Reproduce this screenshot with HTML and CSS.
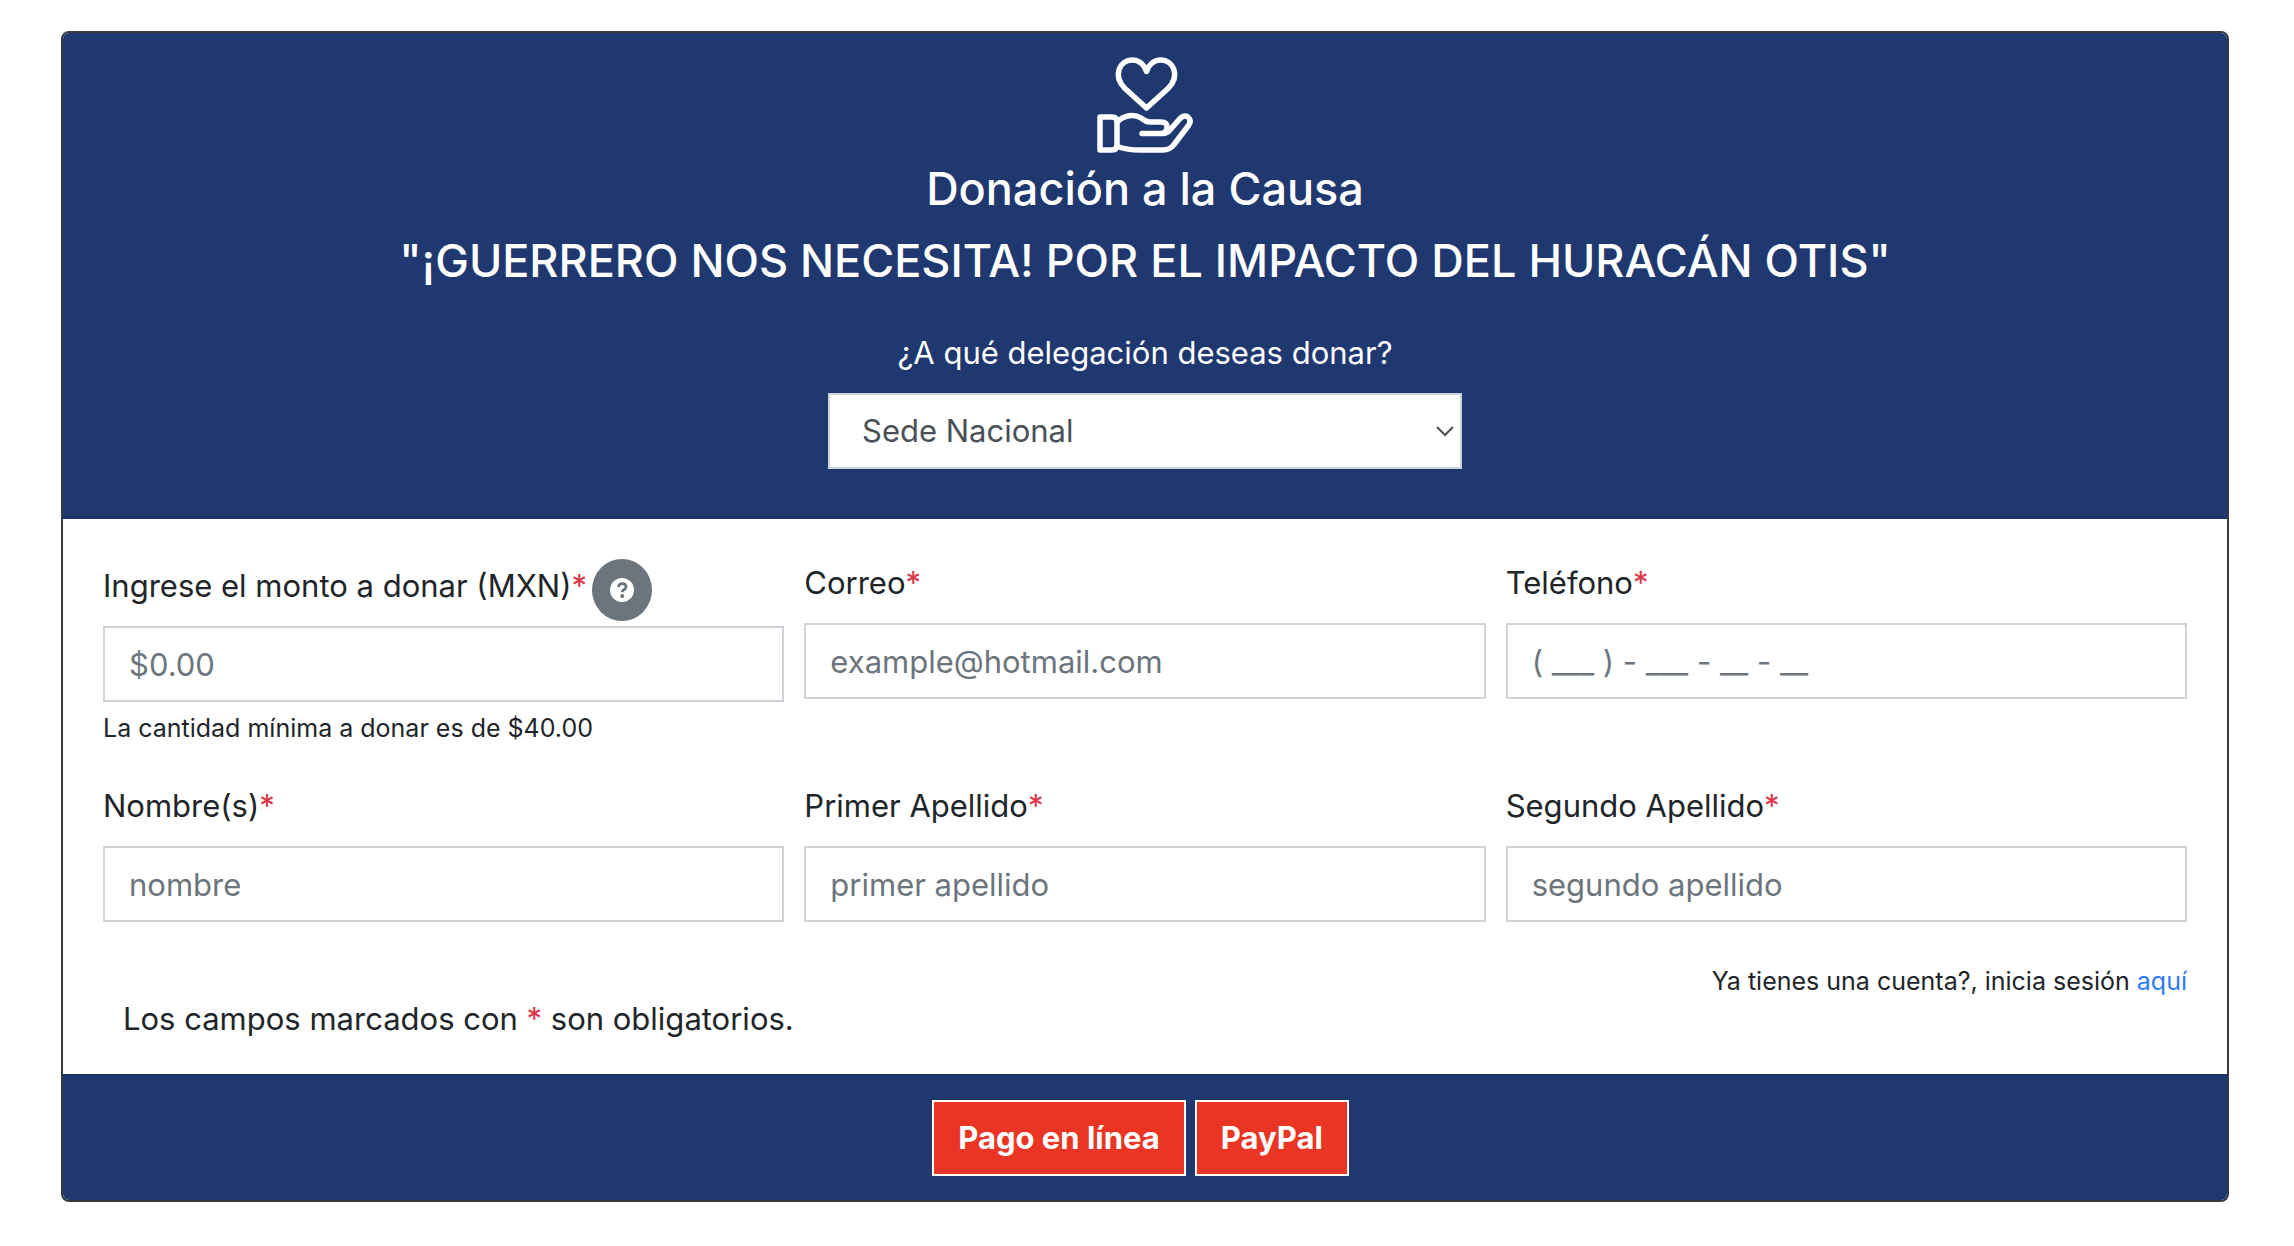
FILE: index.html
```html
<!DOCTYPE html>
<html lang="es">
<head>
<meta charset="utf-8">
<meta name="viewport" content="width=device-width, initial-scale=1">
<title>Donación a la Causa</title>
<link rel="stylesheet" href="styles.css">
</head>
<body>
<form class="card">
  <header class="card-header">
    <svg class="logo" viewBox="0 0 96 96" fill="none" stroke="currentColor" stroke-width="5.5" stroke-linejoin="round" stroke-linecap="round" aria-hidden="true">
      <path d="M49.500 51 L28 31.500 C15 18.500 23 3 35 3 C42.500 3 47.500 8 49.500 14.500 C51.500 8 56.500 3 64 3 C76 3 84 18.500 71 31.500 Z"/>
      <path d="M3 60 H15 Q20 60 20 65 V88 Q20 93 15 93 H3 Z"/>
      <path d="M20 65 C27 58 37 56.500 44 61 L47 63 Q49.500 65 53 65 H64 Q70 65 70 70 Q70 76.500 64 76.500 H45"/>
      <path d="M66 76.500 Q70 76.500 73 73 L83 61.500 Q87 57.500 91 60 Q95 63.500 91.500 68.500 L77 87.500 Q73 93 66 93 H43 Q30 93 20 89.500"/>
    </svg>
    <h1 class="title">Donación a la Causa</h1>
    <h2 class="title">"¡GUERRERO NOS NECESITA! POR EL IMPACTO DEL HURACÁN OTIS"</h2>
    <label class="branch-label" for="delegacion">¿A qué delegación deseas donar?</label>
    <div class="select-box">
      <select class="control select" id="delegacion"><option>Sede Nacional</option></select>
      <svg class="chevron" viewBox="0 0 18 11" fill="none" stroke="currentColor" stroke-width="2" aria-hidden="true"><path d="M1 1 L9 9 L17 1"/></svg>
    </div>
  </header>

  <div class="card-body">
    <div class="fields">
      <div class="field">
        <div class="label-row">
          <label class="label" for="monto">Ingrese el monto a donar (MXN)<span class="required">*</span></label>
          <button class="help" type="button" aria-label="Ayuda">
            <svg class="help-icon" viewBox="0 0 24 24" aria-hidden="true">
              <circle cx="12" cy="12" r="12" fill="#fff"/>
              <path d="M8.200 9 C9.200 6.300 11 5.600 12.500 5.700 C14.600 5.800 16 7.100 16 8.900 C16 11.600 12.200 11.400 12.200 14.300" fill="none" stroke="#6c757d" stroke-width="2.800"/>
              <circle cx="12.200" cy="17.900" r="2" fill="#6c757d"/>
            </svg>
          </button>
        </div>
        <input class="control" id="monto" type="text" placeholder="$0.00">
        <small class="hint">La cantidad mínima a donar es de $40.00</small>
      </div>
      <div class="field">
        <label class="label" for="correo">Correo<span class="required">*</span></label>
        <input class="control" id="correo" type="email" placeholder="example@hotmail.com">
      </div>
      <div class="field">
        <label class="label" for="telefono">Teléfono<span class="required">*</span></label>
        <input class="control" id="telefono" type="tel" placeholder="( ___ ) - ___ - __ - __">
      </div>
      <div class="field">
        <label class="label" for="nombre">Nombre(s)<span class="required">*</span></label>
        <input class="control" id="nombre" type="text" placeholder="nombre">
      </div>
      <div class="field">
        <label class="label" for="apellido1">Primer Apellido<span class="required">*</span></label>
        <input class="control" id="apellido1" type="text" placeholder="primer apellido">
      </div>
      <div class="field">
        <label class="label" for="apellido2">Segundo Apellido<span class="required">*</span></label>
        <input class="control" id="apellido2" type="text" placeholder="segundo apellido">
      </div>
    </div>
    <p class="login">Ya tienes una cuenta?, inicia sesión <a class="link" href="#">aquí</a></p>
    <p class="note">Los campos marcados con <span class="required">*</span> son obligatorios.</p>
  </div>

  <footer class="card-footer">
    <button class="pay" type="submit">Pago en línea</button>
    <button class="pay" type="button">PayPal</button>
  </footer>
</form>
</body>
</html>
```
FILE: styles.css
```css
*, *::before, *::after { box-sizing: border-box; }

body {
  margin: 0;
  padding: 31px 65px 0 61px;
  background: #fff;
  color: #212529;
  font-family: Inter, "Liberation Sans", sans-serif;
  font-size: 31px;
  line-height: 48px;
}

h1, h2, p { margin: 0; }

.card {
  border: 2px solid #343a40;
  border-radius: 8px;
  overflow: hidden;
}

.card-header {
  display: flex;
  flex-direction: column;
  align-items: center;
  padding: 24px 40px 48px;
  border-bottom: 2px solid #1c3264;
  background: #203870;
  color: #fff;
  text-align: center;
}

.logo {
  width: 96px;
  height: 96px;
  margin-bottom: 8px;
}

.title {
  padding-bottom: 16px;
  font-size: 45px;
  font-weight: 500;
  line-height: 56px;
}

.branch-label {
  padding: 24px 0 16px;
}

.control {
  width: 100%;
  height: 76px;
  padding: 12px 24px;
  border: 2px solid #ced4da;
  border-radius: 0;
  background: #fff;
  color: #495057;
  font: inherit;
}

.control::placeholder {
  color: #6c757d;
  opacity: 1;
}

.select-box {
  display: grid;
  align-items: center;
  width: 100%;
  max-width: 634px;
  color: #495057;
}

.select {
  grid-area: 1 / 1;
  padding-left: 32px;
  appearance: none;
}

.chevron {
  grid-area: 1 / 1;
  justify-self: end;
  width: 18px;
  height: 11px;
  margin-right: 8px;
  pointer-events: none;
}

.card-body { padding: 40px 40px 32px; }

.fields {
  display: grid;
  grid-template-columns: repeat(3, 1fr);
  gap: 36px 20px;
}

.field {
  display: flex;
  flex-direction: column;
}

.label { margin-bottom: 16px; }

.label-row {
  display: flex;
  align-items: center;
  gap: 5px;
  margin-bottom: 5px;
}

.label-row .label { margin-bottom: 8px; }

.required { color: #dc3545; }

.help {
  display: grid;
  place-items: center;
  width: 60px;
  height: 62px;
  padding: 0;
  border: 0;
  border-radius: 50%;
  background: #6c757d;
}

.help-icon {
  width: 24px;
  height: 24px;
}

.hint {
  margin-top: 8px;
  font-size: 25px;
  line-height: 36px;
}

.login {
  margin-top: 44px;
  font-size: 25px;
  line-height: 30px;
  text-align: right;
}

.link {
  color: #2f7bf6;
  text-decoration: none;
}

.note {
  padding-left: 20px;
  line-height: 46px;
}

.card-footer {
  display: flex;
  justify-content: center;
  padding: 24px;
  border-top: 2px solid #1c3264;
  background: #203870;
}

.pay {
  height: 76px;
  margin-right: 9px;
  padding: 0 24px;
  border: 2px solid #fff;
  background: #eb3524;
  color: #fff;
  font: inherit;
  font-weight: 700;
}
```
